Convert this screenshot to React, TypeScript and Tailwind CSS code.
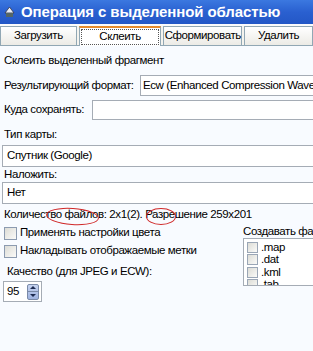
import React from "react"

const font = { fontFamily: '"Liberation Sans", Arial, sans-serif' }

function Check({ label }: { label: string }) {
  return (
    <div className="flex items-center gap-[3px] h-[18px]">
      <div className="w-[13px] h-[13px] shrink-0 border border-[#8c9bb0] bg-gradient-to-br from-[#dcdcd6] to-[#fbfbf9]" />
      <span>{label}</span>
    </div>
  )
}

function ListCheck({ label }: { label: string }) {
  return (
    <div className="flex items-center gap-[3px] h-[12.5px]">
      <div className="w-[11px] h-[11px] shrink-0 border border-[#9aa6b6] bg-gradient-to-br from-[#dcdcd6] to-[#fbfbf9]" />
      <span>{label}</span>
    </div>
  )
}

function Tab({ label, active, w }: { label: string; active?: boolean; w: string }) {
  return (
    <div
      className={`${w} flex border border-[#91a7b4] border-b-0 ${
        active ? "bg-white border-t-2 border-t-[#e68b2c] -mb-px h-[20px] p-px" : "h-[19px] bg-gradient-to-b from-white to-[#ecebe6]"
      }`}
    >
      <span className={`flex-1 flex items-center justify-center ${active ? "border border-dotted border-[#555]" : ""}`}>{label}</span>
    </div>
  )
}

export default function App() {
  return (
    <div className="w-[313px] h-[351px] overflow-hidden bg-[#f8fbff] text-[11.5px] tracking-[-0.4px] text-black" style={font}>
      <div className="h-[24px] flex items-center gap-[6px] pl-[4px] bg-gradient-to-b from-[#3b78e0] via-[#2a60d0] to-[#2357c6] text-white text-[15px] font-bold whitespace-nowrap">
        <svg width="11" height="12" viewBox="0 0 11 12">
          <path d="M5.5 1 L10 7 L1 7 Z" fill="#e8eef8" stroke="#334" strokeWidth="0.8" />
          <rect x="2" y="7" width="7" height="4" fill="#566" />
        </svg>
        <span className="tracking-[-0.1px]">Операция с выделенной областью</span>
      </div>
      <div className="h-[2px] bg-[#fbfbfb]" />
      <div className="flex items-end gap-[2px] h-[20px] border-b border-[#91a7b4] bg-[#f4f3ee] whitespace-nowrap">
        <Tab label="Загрузить" w="w-[78px]" />
        <Tab label="Склеить" w="w-[84px]" active />
        <Tab label="Сформировать" w="w-[80px]" />
        <Tab label="Удалить" w="w-[70px]" />
      </div>
      <div className="pl-[4px] flex flex-col whitespace-nowrap">
        <div className="mt-[6px] h-[16px]">Склеить выделенный фрагмент</div>
        <div className="mt-[7px] flex items-center h-[21px]">
          <span className="w-[136px] shrink-0">Результирующий формат:</span>
          <div className="flex-1 min-w-0 h-[21px] border border-[#a5acb5] border-r-0 bg-white pl-[2px] flex items-center overflow-hidden">
            Ecw (Enhanced Compression Wavelet)
          </div>
        </div>
        <div className="mt-[4px] flex items-center h-[20px]">
          <span className="w-[88px] shrink-0">Куда сохранять:</span>
          <div className="flex-1 h-[20px] border border-[#a5acb5] border-r-0 bg-white" />
        </div>
        <div className="mt-[6px] h-[16px]">Тип карты:</div>
        <div className="-ml-[2px] mt-[3px] h-[22px] border border-[#a5acb5] border-r-0 bg-white flex items-center pl-[4px]">Спутник (Google)</div>
        <div className="h-[14px] leading-[14px]">Наложить:</div>
        <div className="-ml-[2px] mt-[1px] h-[22px] border border-[#a5acb5] border-r-0 bg-white flex items-center pl-[4px]">Нет</div>
        <div className="relative mt-[2px] h-[16px] leading-[16px]">
          Количество файлов: 2x1(2). Разрешение 259x201
          <div className="absolute left-[42px] top-[2px] w-[53px] h-[17px] rounded-[50%] border border-[#d02828] rotate-[4deg]" />
          <div className="absolute left-[142px] top-[2px] w-[30px] h-[17px] rounded-[50%] border border-[#d02828]" />
        </div>
        <div className="flex mt-[2px]">
          <div className="flex flex-col flex-1 min-w-0">
            <Check label="Применять настройки цвета" />
            <Check label="Накладывать отображаемые метки" />
            <div className="ml-[3px] mt-[3px] h-[16px] leading-[16px]">Качество (для JPEG и ECW):</div>
            <div className="mt-[2px] -ml-[1px] w-[39px] h-[21px] border border-[#a5acb5] bg-white flex items-center pl-[3px] justify-between pr-[2px]">
              <span>95</span>
              <div className="w-[12px] h-[16px] flex flex-col border border-[#7a8aa8] rounded-[2px] bg-gradient-to-b from-[#c6d3f0] to-[#9fb3e0]">
                <div className="flex-1 flex items-center justify-center border-b border-[#7a8aa8]">
                  <div className="w-0 h-0 border-l-[3px] border-r-[3px] border-b-[3px] border-l-transparent border-r-transparent border-b-[#1c2a50]" />
                </div>
                <div className="flex-1 flex items-center justify-center">
                  <div className="w-0 h-0 border-l-[3px] border-r-[3px] border-t-[3px] border-l-transparent border-r-transparent border-t-[#1c2a50]" />
                </div>
              </div>
            </div>
          </div>
          <div className="w-[70px] shrink-0 flex flex-col overflow-hidden">
            <div className="h-[14px] leading-[14px]">Создавать файлы</div>
            <div className="h-[48px] border border-[#a5acb5] border-r-0 bg-white pl-[3px] pt-[2px] overflow-hidden">
              <ListCheck label=".map" />
              <ListCheck label=".dat" />
              <ListCheck label=".kml" />
              <ListCheck label=".tab" />
            </div>
          </div>
        </div>
      </div>
    </div>
  )
}
